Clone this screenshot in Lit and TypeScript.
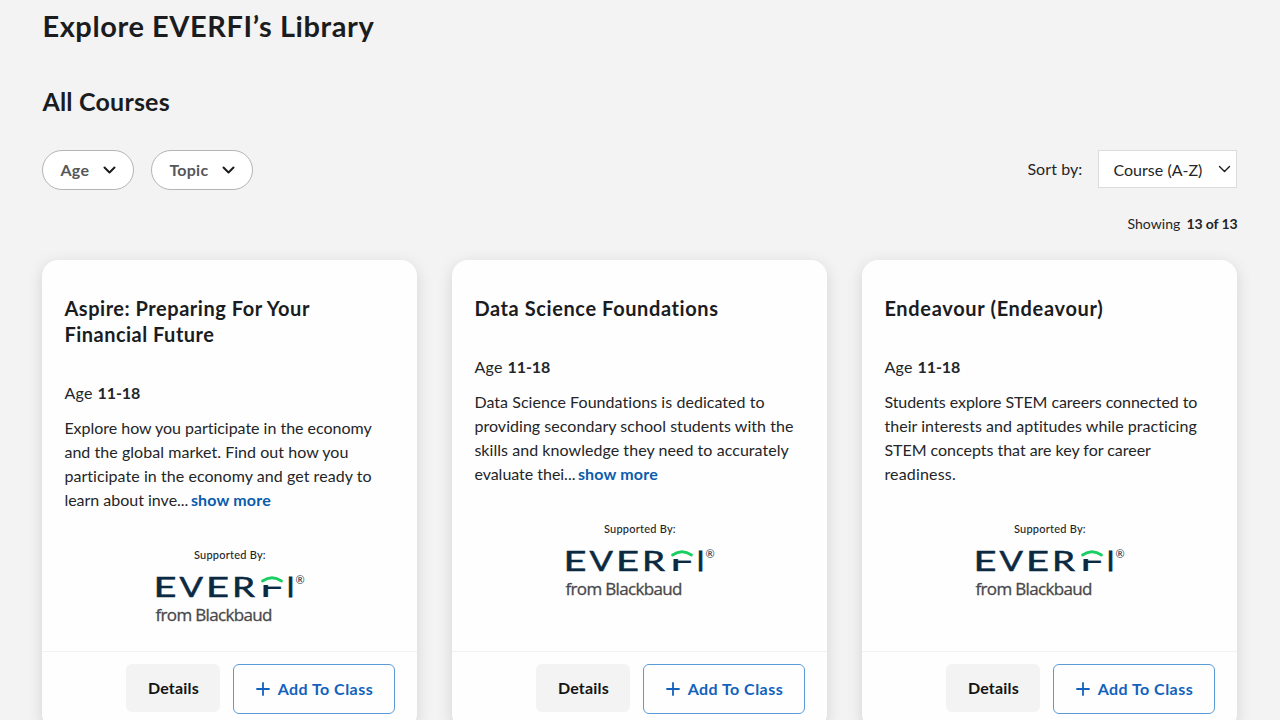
import { css, html, svg, LitElement } from "lit";
import { customElement, property } from "lit/decorators.js";

interface Line {
  text: string;
  width: number;
}

interface Course {
  title: Line[];
  ages: string;
  summary: Line[];
  truncated: boolean;
}

const courses: Course[] = [
  {
    title: [
      { text: "Aspire: Preparing For Your", width: 245.5 },
      { text: "Financial Future", width: 150 }
    ],
    ages: "11-18",
    summary: [
      { text: "Explore how you participate in the economy", width: 307.5 },
      { text: "and the global market. Find out how you", width: 284 },
      { text: "participate in the economy and get ready to", width: 307.5 },
      { text: "learn about inve...", width: 124 }
    ],
    truncated: true
  },
  {
    title: [{ text: "Data Science Foundations", width: 244.5 }],
    ages: "11-18",
    summary: [
      { text: "Data Science Foundations is dedicated to", width: 290.5 },
      { text: "providing secondary school students with the", width: 319 },
      { text: "skills and knowledge they need to accurately", width: 314.5 },
      { text: "evaluate thei...", width: 101 }
    ],
    truncated: true
  },
  {
    title: [{ text: "Endeavour (Endeavour)", width: 219 }],
    ages: "11-18",
    summary: [
      { text: "Students explore STEM careers connected to", width: 313 },
      { text: "their interests and aptitudes while practicing", width: 313 },
      { text: "STEM concepts that are key for career", width: 266.5 },
      { text: "readiness.", width: 71.5 }
    ],
    truncated: false
  }
];

// One line of text whose tracking is set so that it fills the given width.
@customElement("tracked-text")
export class TrackedTextElement extends LitElement {
  @property() text = "";
  @property({ type: Number }) width = 0;

  async updated() {
    await document.fonts.ready;
    const el = this.renderRoot.querySelector("span")!;
    el.style.letterSpacing = "0px";
    const natural = el.getBoundingClientRect().width;
    el.style.letterSpacing = `${(this.width - natural) / this.text.length}px`;
  }

  render() {
    return html`<span>${this.text}</span>`;
  }

  static styles = css`
    :host {
      display: inline-block;
      white-space: nowrap;
    }
    span {
      display: inline-block;
    }
  `;
}

const tracked = (text: string, width: number) =>
  html`<tracked-text .text=${text} .width=${width}></tracked-text>`;

const chevron = svg`<path d="M1.5 1.5 6.5 6.5 11.5 1.5" />`;

@customElement("course-card")
export class CourseCardElement extends LitElement {
  @property({ attribute: false }) course!: Course;

  render() {
    const { title, ages, summary, truncated } = this.course;

    return html`
      <article>
        <div class="content">
          <h3>${title.map((l) => html`<div>${tracked(l.text, l.width)}</div>`)}</h3>
          <div class="ages">${tracked("Age", 28.5)}<b>${tracked(ages, 43)}</b></div>
          <div class="summary">
            ${summary.map(
              (l, i) => html`<div>${tracked(l.text, l.width)}${
                truncated && i === summary.length - 1
                  ? html`<a class="more">${tracked("show more", 80)}</a>`
                  : ""
              }</div>`
            )}
          </div>
          <div class="sponsor">
            <span class="supported">${tracked("Supported By:", 72)}</span>
            <svg class="logo" width="150" height="56" viewBox="0 0 150 56">
              <clipPath id="lower"><rect x="100" y="19" width="30" height="16" /></clipPath>
              <g class="word">
                <text x="-1.5" y="31" textLength="23" lengthAdjust="spacingAndGlyphs">E</text>
                <text x="24.5" y="31" textLength="23.5" lengthAdjust="spacingAndGlyphs">V</text>
                <text x="51" y="31" textLength="23" lengthAdjust="spacingAndGlyphs">E</text>
                <text x="77" y="31" textLength="23" lengthAdjust="spacingAndGlyphs">R</text>
                <g class="short" clip-path="url(#lower)">
                  <text x="104.5" y="31" textLength="25" lengthAdjust="spacingAndGlyphs">F</text>
                </g>
                <text class="narrow" x="131.7" y="31">I</text>
              </g>
              <path class="arc" d="M107.5 15Q117 8.5 126.5 15" />
              <text class="mark" x="140.5" y="18">®</text>
              <text class="from" x="0.5" y="54.5" textLength="117">from Blackbaud</text>
            </svg>
          </div>
        </div>
        <footer>
          <button class="details">${tracked("Details", 51)}</button>
          <button class="add">
            <svg width="14" height="14" viewBox="0 0 14 14"><path d="M7 1v12M1 7h12" /></svg>
            ${tracked("Add To Class", 95.5)}
          </button>
        </footer>
      </article>
    `;
  }

  static styles = css`
    :host {
      display: block;
    }

    article {
      display: flex;
      flex-direction: column;
      height: 470px;
      border-radius: 16px;
      background: #fefefe;
      box-shadow: 0 4px 16px rgba(0, 0, 0, 0.13);
    }

    .content {
      flex: 1;
      padding: 34.5px 22px 0;
    }

    h3 {
      margin: 0 0 34px;
      font-size: 20px;
      line-height: 26px;
      font-weight: 700;
      color: #1b1c1f;
    }

    .ages {
      display: flex;
      gap: 4.5px;
      height: 24px;
      font-size: 16px;
      line-height: 24px;
    }

    .summary {
      margin-top: 11.5px;
      font-size: 16px;
      line-height: 24px;
    }

    .more {
      margin-left: 2.5px;
      font-weight: 700;
      color: #0b5cab;
    }

    .sponsor {
      display: flex;
      flex-direction: column;
      align-items: center;
      margin-top: 34px;
    }

    .supported {
      height: 18px;
      font-size: 11px;
      line-height: 18px;
      font-weight: 500;
    }

    .logo {
      display: block;
      margin-top: 2px;
      overflow: visible;
    }

    .word {
      font-family: Lato, sans-serif;
      font-size: 27px;
      fill: #0b2a42;
      stroke: #0b2a42;
      stroke-width: 0.5px;
    }

    .short {
      stroke-width: 0.1px;
    }

    .narrow {
      stroke-width: 0.8px;
    }

    .arc {
      fill: none;
      stroke: #18cf62;
      stroke-width: 2.8px;
      stroke-linecap: round;
    }

    .mark {
      font-size: 11px;
      fill: #0b2a42;
    }

    .from {
      font-family: "Open Sans", sans-serif;
      font-size: 17px;
      fill: #48484a;
      stroke: #48484a;
      stroke-width: 0.3px;
    }

    footer {
      display: flex;
      justify-content: flex-end;
      gap: 13px;
      height: 79px;
      box-sizing: border-box;
      padding: 12px 22px 0;
      border-top: 1px solid #f2f2f2;
    }

    button {
      display: flex;
      align-items: center;
      justify-content: center;
      box-sizing: border-box;
      margin: 0;
      padding: 0 0 2px;
      border: 0;
      border-radius: 6px;
      font: 700 16px Lato, sans-serif;
    }

    .details {
      width: 94px;
      height: 48px;
      background: #f3f3f3;
      color: #141414;
    }

    .add {
      gap: 8px;
      width: 162px;
      height: 50px;
      border: 1px solid #5b9bd5;
      background: #fefefe;
      color: #1262bd;
    }

    .add svg {
      margin-top: 2px;
    }

    .add path {
      fill: none;
      stroke: currentColor;
      stroke-width: 1.8;
      stroke-linecap: round;
    }
  `;
}

@customElement("app-root")
export class AppRootElement extends LitElement {
  render() {
    return html`
      <main>
        <h1>${tracked("Explore EVERFI’s Library", 332)}</h1>
        <h2>${tracked("All Courses", 127.5)}</h2>
        <div class="toolbar">
          <button class="pill age">
            ${tracked("Age", 29)}
            <svg width="13" height="8" viewBox="0 0 13 8">${chevron}</svg>
          </button>
          <button class="pill topic">
            ${tracked("Topic", 39)}
            <svg width="13" height="8" viewBox="0 0 13 8">${chevron}</svg>
          </button>
          <span class="sort">${tracked("Sort by:", 55)}</span>
          <div class="select">
            ${tracked("Course (A-Z)", 89)}
            <svg width="13" height="8" viewBox="0 0 13 8">${chevron}</svg>
          </div>
        </div>
        <div class="count">${tracked("Showing", 53)}<b>${tracked("13 of 13", 51)}</b></div>
        <section>
          ${courses.map((c) => html`<course-card .course=${c}></course-card>`)}
        </section>
      </main>
    `;
  }

  static styles = css`
    :host {
      display: block;
      width: 1280px;
      height: 720px;
      overflow: hidden;
      background: #f3f3f3;
      color: #242528;
      font-family: Lato, sans-serif;
    }

    main {
      padding: 6px 42.6px 0 42.4px;
    }

    h1 {
      margin: 0;
      font-size: 29px;
      line-height: 40px;
      color: #1b1c20;
    }

    h2 {
      margin: 39px 0 0;
      font-size: 25px;
      line-height: 32px;
      color: #1b1c20;
    }

    .toolbar {
      display: flex;
      align-items: center;
      height: 40px;
      margin-top: 33px;
    }

    .pill {
      display: flex;
      align-items: center;
      justify-content: space-between;
      box-sizing: border-box;
      height: 40px;
      margin: 0 17px 0 0;
      padding: 0 17px 1px;
      border: 1px solid #b4b4b4;
      border-radius: 20px;
      background: #fff;
      color: #56575a;
      font: 700 16px Lato, sans-serif;
    }

    .age {
      width: 92px;
    }

    .topic {
      width: 102px;
    }

    .toolbar path {
      fill: none;
      stroke: #1c1c1e;
      stroke-width: 2;
      stroke-linecap: round;
      stroke-linejoin: round;
    }

    .sort {
      margin: 0 16px 0 auto;
      padding-bottom: 3px;
      font-size: 16px;
    }

    .select {
      display: flex;
      align-items: center;
      justify-content: space-between;
      box-sizing: border-box;
      width: 139px;
      height: 38px;
      margin-bottom: 2px;
      padding: 0 5px 0 14px;
      border: 1px solid #dcdcdc;
      background: #fff;
      font-size: 16px;
    }

    .select path {
      stroke-width: 1.4;
    }

    .count {
      display: flex;
      justify-content: flex-end;
      gap: 6px;
      height: 20px;
      margin-top: 24px;
      font-size: 14px;
      line-height: 20px;
    }

    section {
      display: grid;
      grid-template-columns: repeat(3, 375px);
      gap: 35px;
      margin-top: 26px;
    }
  `;
}
